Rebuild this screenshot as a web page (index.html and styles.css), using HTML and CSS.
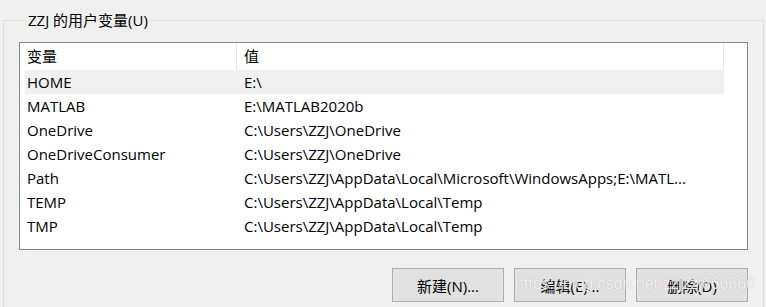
FILE: index.html
```html
<!DOCTYPE html>
<html>
    <head>
        <meta charset="UTF-8">
        <meta name="viewport" content="width=device-width, initial-scale=1.0">
        <title>环境变量</title>
        <link rel="stylesheet" href="styles.css">
    </head>
    <body>
        <fieldset class="var-group">
            <legend class="group-title">ZZJ 的用户变量(U)</legend>
            <div class="var-list">
                <div class="list-row list-head">
                    <div class="cell cell-name">变量</div>
                    <div class="cell cell-value">值</div>
                </div>
                <div class="list-row selected">
                    <div class="cell cell-name">HOME</div>
                    <div class="cell cell-value">E:\</div>
                </div>
                <div class="list-row">
                    <div class="cell cell-name">MATLAB</div>
                    <div class="cell cell-value">E:\MATLAB2020b</div>
                </div>
                <div class="list-row">
                    <div class="cell cell-name">OneDrive</div>
                    <div class="cell cell-value">C:\Users\ZZJ\OneDrive</div>
                </div>
                <div class="list-row">
                    <div class="cell cell-name">OneDriveConsumer</div>
                    <div class="cell cell-value">C:\Users\ZZJ\OneDrive</div>
                </div>
                <div class="list-row">
                    <div class="cell cell-name">Path</div>
                    <div class="cell cell-value">C:\Users\ZZJ\AppData\Local\Microsoft\WindowsApps;E:\MATL...</div>
                </div>
                <div class="list-row">
                    <div class="cell cell-name">TEMP</div>
                    <div class="cell cell-value">C:\Users\ZZJ\AppData\Local\Temp</div>
                </div>
                <div class="list-row">
                    <div class="cell cell-name">TMP</div>
                    <div class="cell cell-value">C:\Users\ZZJ\AppData\Local\Temp</div>
                </div>
            </div>
            <div class="button-bar">
                <button class="win-button">新建(N)...</button>
                <button class="win-button">编辑(E)...</button>
                <button class="win-button">删除(D)</button>
                <span class="watermark">https://blog.csdn.net/zzjzzj666666</span>
            </div>
        </fieldset>
    </body>
</html>
```

FILE: styles.css
```css
* {
    margin: 0;
    padding: 0;
    box-sizing: border-box;
}
body {
    font-family: "Open Sans", "Noto Sans CJK SC", sans-serif;
    font-size: 15px;
    background-color: #f0f0f0;
    color: #000;
    overflow: hidden;
}
.var-group {
    margin: 10px 2px 0 3px;
    border: 1px solid #dcdcdc;
    padding: 12px 15px 20px 15px;
    height: 320px;
}
.group-title {
    margin-left: 7px;
    padding: 0 2px;
    line-height: 20px;
}
.var-list {
    position: relative;
    height: 208px;
    border: 1px solid #828790;
    background-color: #fff;
    padding-left: 5px;
}
.list-row {
    display: grid;
    grid-template-columns: 212px 487px;
    height: 24px;
    line-height: 24px;
    white-space: nowrap;
}
.list-head {
    height: 27px;
    line-height: 27px;
    margin-left: -5px;
    grid-template-columns: 217px 487px;
}
.list-head .cell-name {
    padding-left: 7px;
}
.list-head .cell {
    border-right: 1px solid #e5e5e5;
}
.selected {
    background-color: #f0f0f0;
    width: 699px;
}
.cell {
    overflow: hidden;
}
.cell-name {
    padding-left: 2px;
}
.cell-value {
    padding-left: 7px;
}
.button-bar {
    position: relative;
    display: flex;
    justify-content: flex-end;
    gap: 10px;
    margin-top: 18px;
}
.win-button {
    width: 112px;
    height: 34px;
    background-color: #e1e1e1;
    border: 1px solid #adadad;
    font-family: inherit;
    font-size: 15px;
    color: #000;
}
.watermark {
    position: absolute;
    right: -7px;
    top: 7px;
    font-family: "Liberation Sans", sans-serif;
    font-size: 16px;
    color: rgba(255, 255, 255, 0.85);
    text-shadow: 0 0 1px rgba(0, 0, 0, 0.25);
    pointer-events: none;
}
```
